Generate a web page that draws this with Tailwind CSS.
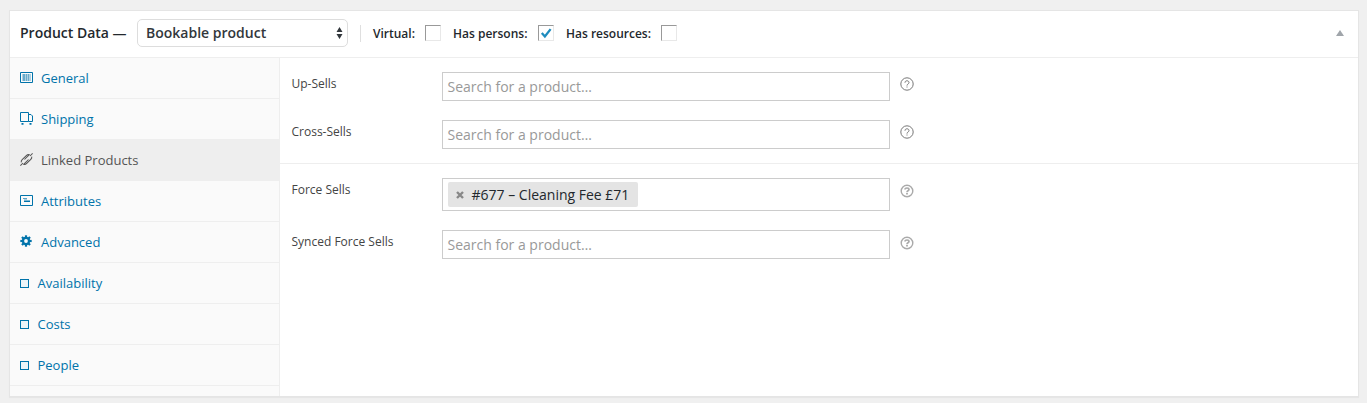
<!DOCTYPE html>
<html lang="en">
<head>
<meta charset="utf-8">
<title>Product Data</title>
<script src="https://cdn.jsdelivr.net/npm/@tailwindcss/browser@4"></script>
</head>
<body class="h-[403px] overflow-hidden bg-[#f0f0f0] pt-[10px] pl-[9px] font-['Open_Sans',sans-serif] text-[#444]">
<svg class="hidden">
  <symbol id="help-thin" viewBox="0 0 14 14"><circle cx="7" cy="7" r="6.2" fill="none" stroke="currentColor" stroke-width="1"/><path d="M5 5.7C5 4.4 5.8 3.8 7 3.8s2 .7 2 1.8c0 1.4-2 1.4-2 3" fill="none" stroke="currentColor" stroke-width="1"/><path d="M6.5 9.6h1v1h-1z" fill="currentColor"/></symbol>
  <symbol id="help-bold" viewBox="0 0 14 14"><circle cx="7" cy="7" r="5.8" fill="none" stroke="currentColor" stroke-width="1.4"/><path d="M5 5.6C5 4.5 5.8 4 7 4s2 .6 2 1.6c0 1.3-2 1.2-2 2.6" fill="none" stroke="currentColor" stroke-width="1.7"/><path d="M6.1 9.1h1.8v1.5H6.1z" fill="currentColor"/></symbol>
</svg>
<div class="flex h-[387px] w-[1350px] flex-col border border-[#e5e5e5] bg-white shadow-[0_1px_1px_rgba(0,0,0,0.04)]">
  <header class="flex h-[47px] shrink-0 items-center border-b border-[#eee] pl-[10px] pb-[2px] text-[#23282d]">
    <h2 class="w-[117px] whitespace-nowrap text-[14px] leading-5 font-semibold">Product Data —</h2>
    <div class="flex h-7 w-[211px] items-center justify-between rounded-[5px] border border-[#ddd] pl-[8px] pr-[4px] text-[14px] font-semibold text-[#32373c]">
      <span class="pb-[2px] whitespace-nowrap">Bookable product</span>
      <svg class="h-[12px] w-[7px]" viewBox="0 0 7 12" fill="#32373c"><path d="M3.5 0L6.5 5h-6zM3.5 12L.5 7h6z"/></svg>
    </div>
    <div class="ml-[12px] h-[17px] w-px bg-[#dfdfdf]"></div>
    <div class="flex items-center pl-[12px] text-[12px] font-semibold">
      <span class="w-[52px] pt-px whitespace-nowrap">Virtual:</span>
      <span class="size-4 border border-t-[#999] border-l-[#999] border-r-[#e8e8e8] border-b-[#e8e8e8]"></span>
      <span class="ml-[12px] w-[85px] pt-px whitespace-nowrap">Has persons:</span>
      <span class="size-4 border border-t-[#999] border-l-[#999] border-r-[#e8e8e8] border-b-[#e8e8e8]"><svg class="size-[14px]" viewBox="0 0 14 14"><path d="M2.8 6.9L5.9 10.4 11.6 3.1" fill="none" stroke="#1e8cbe" stroke-width="2.3"/></svg></span>
      <span class="ml-[12px] w-[95px] pt-px whitespace-nowrap">Has resources:</span>
      <span class="size-4 border border-t-[#999] border-l-[#999] border-r-[#e8e8e8] border-b-[#e8e8e8]"></span>
    </div>
    <svg class="mr-[14px] ml-auto h-[6px] w-[8px]" viewBox="0 0 8 6"><path d="M4 0l4 6H0z" fill="#a0a5aa"/></svg>
  </header>
  <div class="flex min-h-0 flex-1">
    <nav class="w-[270px] shrink-0 border-r border-[#eee] bg-[#fafafa] text-[13px] leading-5 text-[#0073aa]">
      <a class="flex h-[41px] items-center border-b border-[#eee] pl-[10px]"><svg class="mr-[8px] mb-[2px] h-[11px] w-[13px]" viewBox="0 0 13 11"><path d="M.5.5h12v10H.5z" fill="none" stroke="currentColor"/><path d="M2 2h9v7H2z" fill="#0073aa" opacity=".3"/><path d="M3 2h2v7H3zM6 2h1v7H6zM8 2h1v7H8z" fill="currentColor" opacity=".4"/></svg>General</a>
      <a class="flex h-[41px] items-center border-b border-[#eee] pl-[10px]"><svg class="mr-[8px] mb-[2px] h-[13px] w-[13px]" viewBox="0 0 13 13"><path d="M.5.5h8v9h-8zM8.5 2.5h2.500l1.500 1.500v5.500h-4" fill="none" stroke="currentColor"/><path d="M1.500 11h2v1.700h-2zM9.500 11h2v1.700h-2z" fill="currentColor"/></svg>Shipping</a>
      <a class="flex h-[41px] items-center border-b border-[#eee] bg-[#eee] pl-[10px] text-[#555]"><svg class="mr-[8px] mb-[2px] h-[13px] w-[13px]" viewBox="0 0 13 13" fill="none" stroke="currentColor" stroke-width="1.050"><path d="M.4 12.600L3 10M12.600.4L10 3M1.300 9.400C1 8.300 1.400 7.500 2.200 6.700L6.300 2.600C7.300 1.600 8.200 1.200 9.300 1.700L4.500 6.500M11.700 3.600C12 4.700 11.600 5.500 10.800 6.300L6.700 10.400C5.700 11.400 4.800 11.800 3.700 11.300L8.500 6.500"/></svg>Linked Products</a>
      <a class="flex h-[41px] items-center border-b border-[#eee] pl-[10px]"><svg class="mr-[8px] mb-[2px] h-[11px] w-[13px]" viewBox="0 0 13 11"><path d="M.5.5h12v10H.5z" fill="none" stroke="currentColor"/><path d="M3 3h4v1H3z" fill="currentColor" opacity=".65"/><path d="M4 4h3v1H4z" fill="currentColor" opacity=".3"/><path d="M4 5.500h6v1.500H4z" fill="currentColor"/></svg>Attributes</a>
      <a class="flex h-[41px] items-center border-b border-[#eee] pl-[10px]"><svg class="mr-[8px] mb-[3px] h-[12px] w-[13px]" viewBox="-6 -6 13 12"><g fill="currentColor"><path d="M-1.100-5.700h2.200v11.400h-2.200z"/><path d="M-1.100-5.700h2.200v11.400h-2.200z" transform="rotate(45)"/><path d="M-1.100-5.700h2.200v11.400h-2.200z" transform="rotate(90)"/><path d="M-1.100-5.700h2.200v11.400h-2.200z" transform="rotate(135)"/><circle r="4.200"/></g><circle r="1.900" fill="#fafafa"/></svg>Advanced</a>
      <a class="flex h-[41px] items-center border-b border-[#eee] pl-[10px]"><span class="mr-[8.500px] size-[9px] border border-[#0073aa] bg-[#edf5f9]"></span>Availability</a>
      <a class="flex h-[41px] items-center border-b border-[#eee] pl-[10px]"><span class="mr-[8.500px] size-[9px] border border-[#0073aa] bg-[#edf5f9]"></span>Costs</a>
      <a class="flex h-[41px] items-center border-b border-[#eee] pl-[10px]"><span class="mr-[8.500px] size-[9px] border border-[#0073aa] bg-[#edf5f9]"></span>People</a>
    </nav>
    <main class="flex-1 text-[12px] leading-6">
      <section class="flex h-[106px] flex-col gap-[19px] border-b border-[#eee] pt-[14px] pl-[11.500px]">
        <div class="flex items-start"><label class="w-[150.500px]">Up-Sells</label><div class="h-[29px] w-[448px] border border-[#ccc] pl-[4.500px] text-[14px] leading-[27px] text-[#999]">Search for a product…</div><svg class="mt-[4.500px] ml-[9.500px] size-[14px] text-[#777]"><use href="#help-thin"/></svg></div>
        <div class="flex items-start"><label class="w-[150.500px]">Cross-Sells</label><div class="h-[29px] w-[448px] border border-[#ccc] pl-[4.500px] text-[14px] leading-[27px] text-[#999]">Search for a product…</div><svg class="mt-[4.500px] ml-[9.500px] size-[14px] text-[#777]"><use href="#help-thin"/></svg></div>
      </section>
      <section class="flex flex-col gap-[19px] pt-[14px] pl-[11.500px]">
        <div class="flex items-start"><label class="w-[150.500px]">Force Sells</label><div class="h-[33px] w-[448px] border border-[#ccc] pt-[3px] pl-[5px]"><span class="flex h-[25px] w-[190px] items-center rounded-[2px] bg-[#e4e4e4] pl-[8px] text-[14px] whitespace-nowrap text-[#23282d]"><svg class="mr-[7.500px] size-[8px]" viewBox="0 0 8 8"><path d="M1 1l6 6M7 1L1 7" stroke="#888" stroke-width="2.400"/></svg>#677 – Cleaning Fee £71</span></div><svg class="mt-[6px] ml-[10px] size-[14px] text-[#aaa]"><use href="#help-bold"/></svg></div>
        <div class="flex items-start"><label class="w-[150.500px]">Synced Force Sells</label><div class="h-[29px] w-[448px] border border-[#ccc] pl-[4.500px] text-[14px] leading-[27px] text-[#999]">Search for a product…</div><svg class="mt-[6px] ml-[10px] size-[14px] text-[#aaa]"><use href="#help-bold"/></svg></div>
      </section>
    </main>
  </div>
</div>
</body>
</html>
